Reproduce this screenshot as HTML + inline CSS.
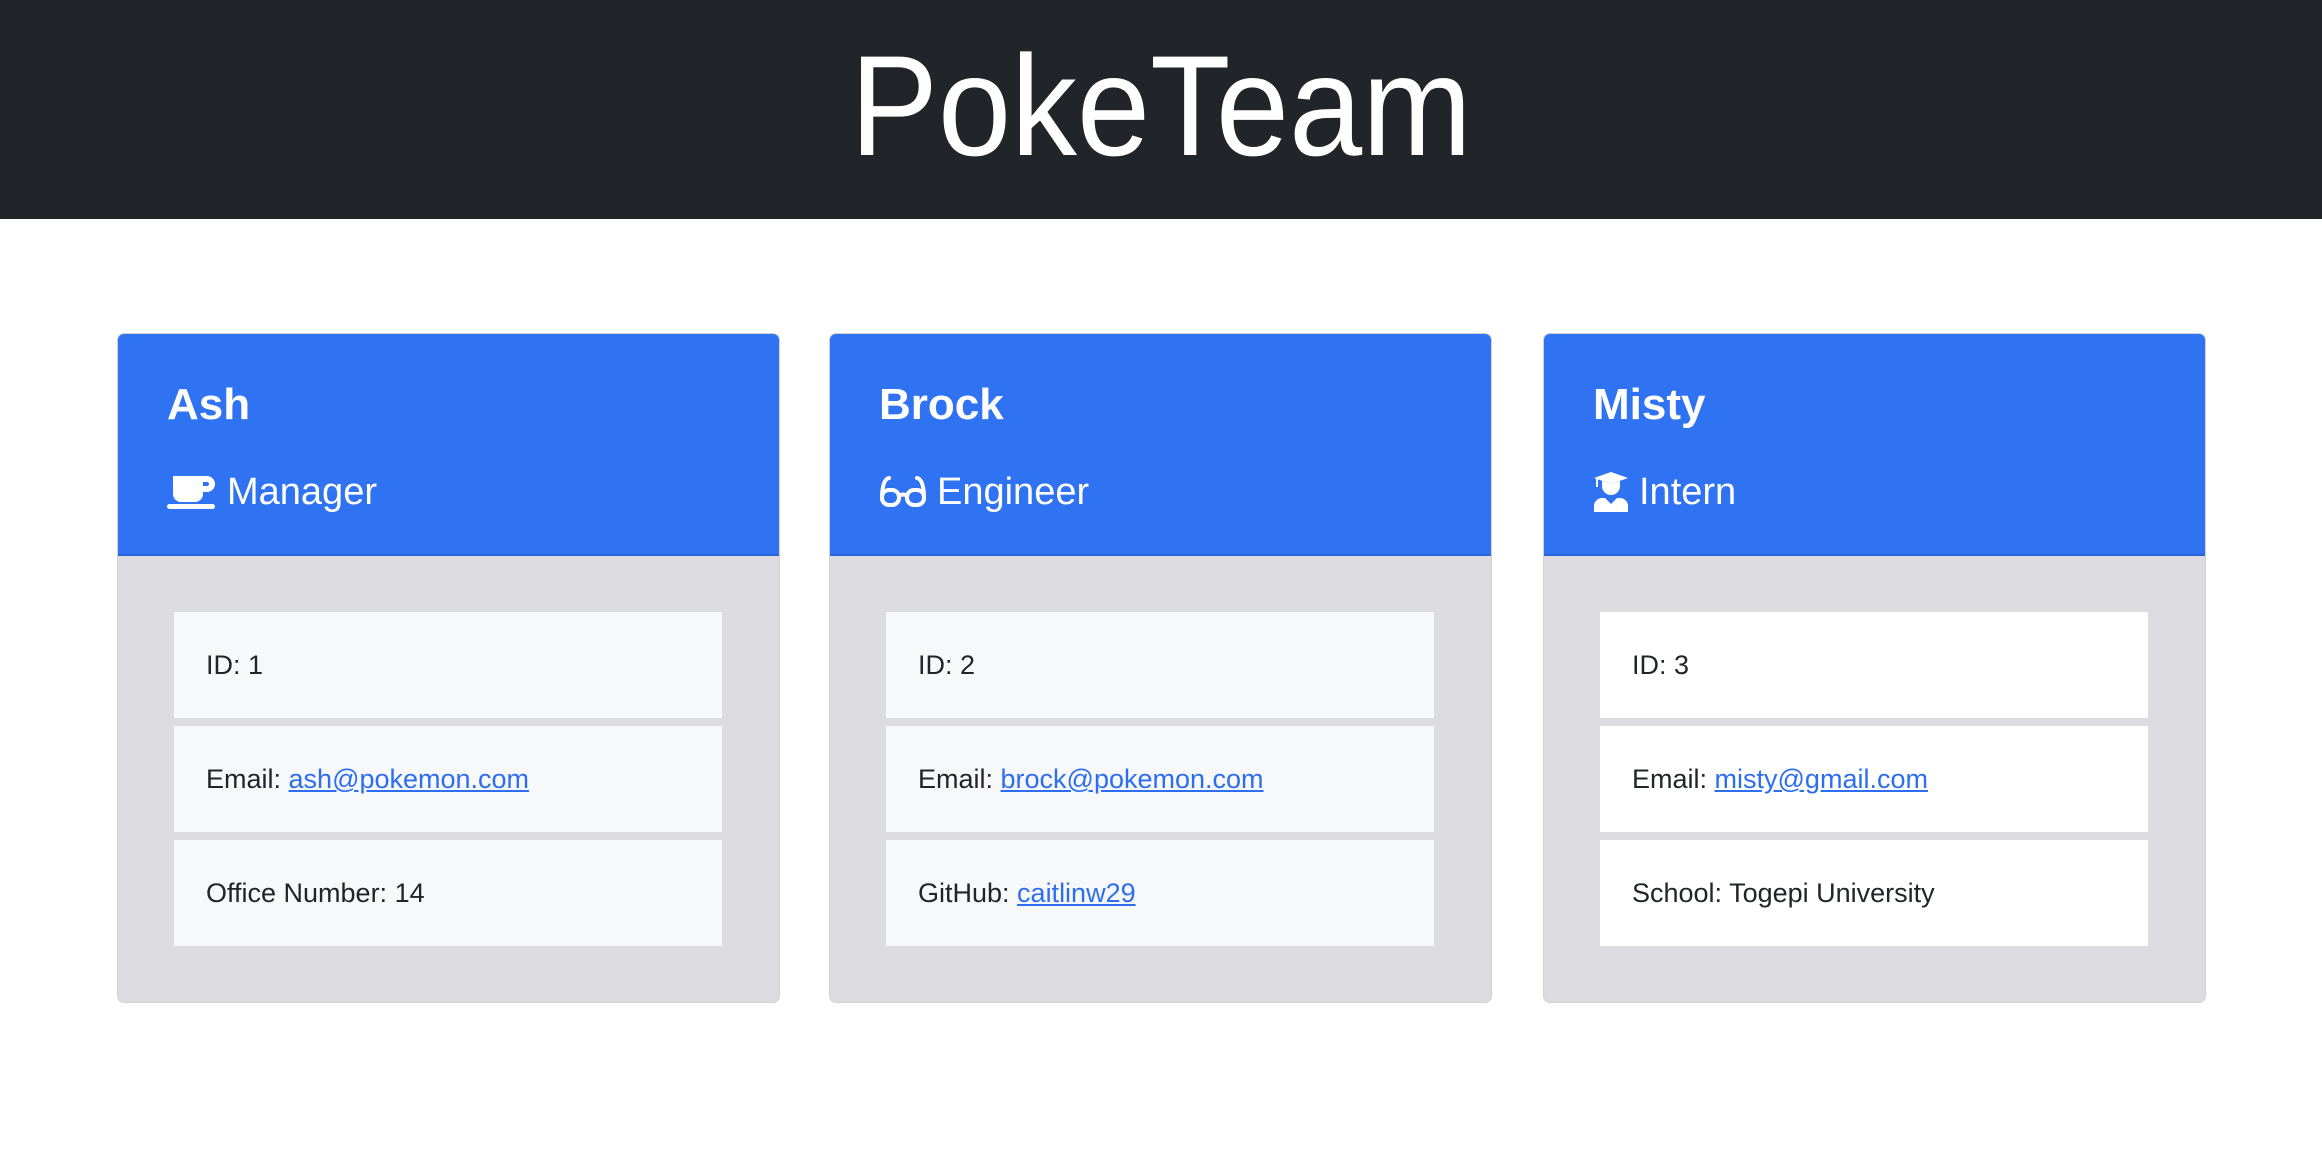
<!DOCTYPE html>
<html><head><meta charset="utf-8"><style>
*{box-sizing:border-box;margin:0;padding:0}
body{width:2322px;height:1152px;background:#fff;font-family:"Liberation Sans",sans-serif;overflow:hidden;position:relative}
.top{position:absolute;left:0;top:0;width:2322px;height:219px;background:#212529}
.title{position:absolute;left:0;width:2322px;top:17px;text-align:center;color:#fff;font-size:143px;line-height:180px;transform:scaleX(0.92)}
.card{position:absolute;top:333px;width:663px;height:670px;background:#dcdce0;border-radius:7px;overflow:hidden;border:1px solid #d2d2d6}
.hd{height:222px;background:#2f73f2;border-bottom:2px solid #2a66d8;color:#fff;position:relative}
.name{position:absolute;left:49px;top:44px;font-size:44px;font-weight:bold;line-height:54px}
.role{position:absolute;left:49px;top:135px;font-size:38px;line-height:46px;display:flex;align-items:center}
.role svg{margin-right:10px}
.item{position:absolute;left:56px;width:548px;height:106px;background:#f7f8fa;font-size:27px;color:#212529;padding-left:32px;line-height:106px}
.w .item{background:#fff}
a{color:#2d6ef0;text-decoration:underline}
</style></head><body>
<div class="top"><div class="title">PokeTeam</div></div>

<div class="card" style="left:117px">
 <div class="hd"><div class="name">Ash</div>
 <div class="role"><svg width="50" height="36" viewBox="0 0 50 36"><path d="M6 2h30v18a8 8 0 0 1-8 8H14a8 8 0 0 1-8-8z" fill="#fff"/><path d="M36 2h4a8 8 0 0 1 0 16h-4v-6h4a2 2 0 0 0 0-4h-4z" fill="#fff"/><rect x="0" y="30" width="48" height="5" rx="2.5" fill="#fff"/></svg>Manager</div></div>
 <div class="item" style="top:278px">ID: 1</div>
 <div class="item" style="top:392px">Email: <a>ash@pokemon.com</a></div>
 <div class="item" style="top:506px">Office Number: 14</div>
</div>

<div class="card" style="left:829px">
 <div class="hd"><div class="name">Brock</div>
 <div class="role"><svg width="48" height="34" viewBox="0 0 48 34" fill="none" stroke="#fff" stroke-width="4" stroke-linecap="round"><path d="M10 3Q4 4 3 20"/><path d="M38 3Q44 4 45 20"/><rect x="3" y="15" width="17" height="15" rx="7"/><rect x="28" y="15" width="17" height="15" rx="7"/><path d="M20 21q4-3 8 0"/></svg>Engineer</div></div>
 <div class="item" style="top:278px">ID: 2</div>
 <div class="item" style="top:392px">Email: <a>brock@pokemon.com</a></div>
 <div class="item" style="top:506px">GitHub: <a>caitlinw29</a></div>
</div>

<div class="card w" style="left:1543px">
 <div class="hd"><div class="name">Misty</div>
 <div class="role"><svg width="36" height="40" viewBox="0 0 36 40"><path d="M18 0L35 6L18 12L1 6z" fill="#fff"/><path d="M4 7v8" stroke="#fff" stroke-width="2"/><path d="M9 9v5a9 9 0 0 0 18 0V9l-9 3z" fill="#fff"/><path d="M1 40v-6a8 8 0 0 1 8-8h3l6 6 6-6h3a8 8 0 0 1 8 8v6z" fill="#fff"/></svg>Intern</div></div>
 <div class="item" style="top:278px">ID: 3</div>
 <div class="item" style="top:392px">Email: <a>misty@gmail.com</a></div>
 <div class="item" style="top:506px">School: Togepi University</div>
</div>
</body></html>
